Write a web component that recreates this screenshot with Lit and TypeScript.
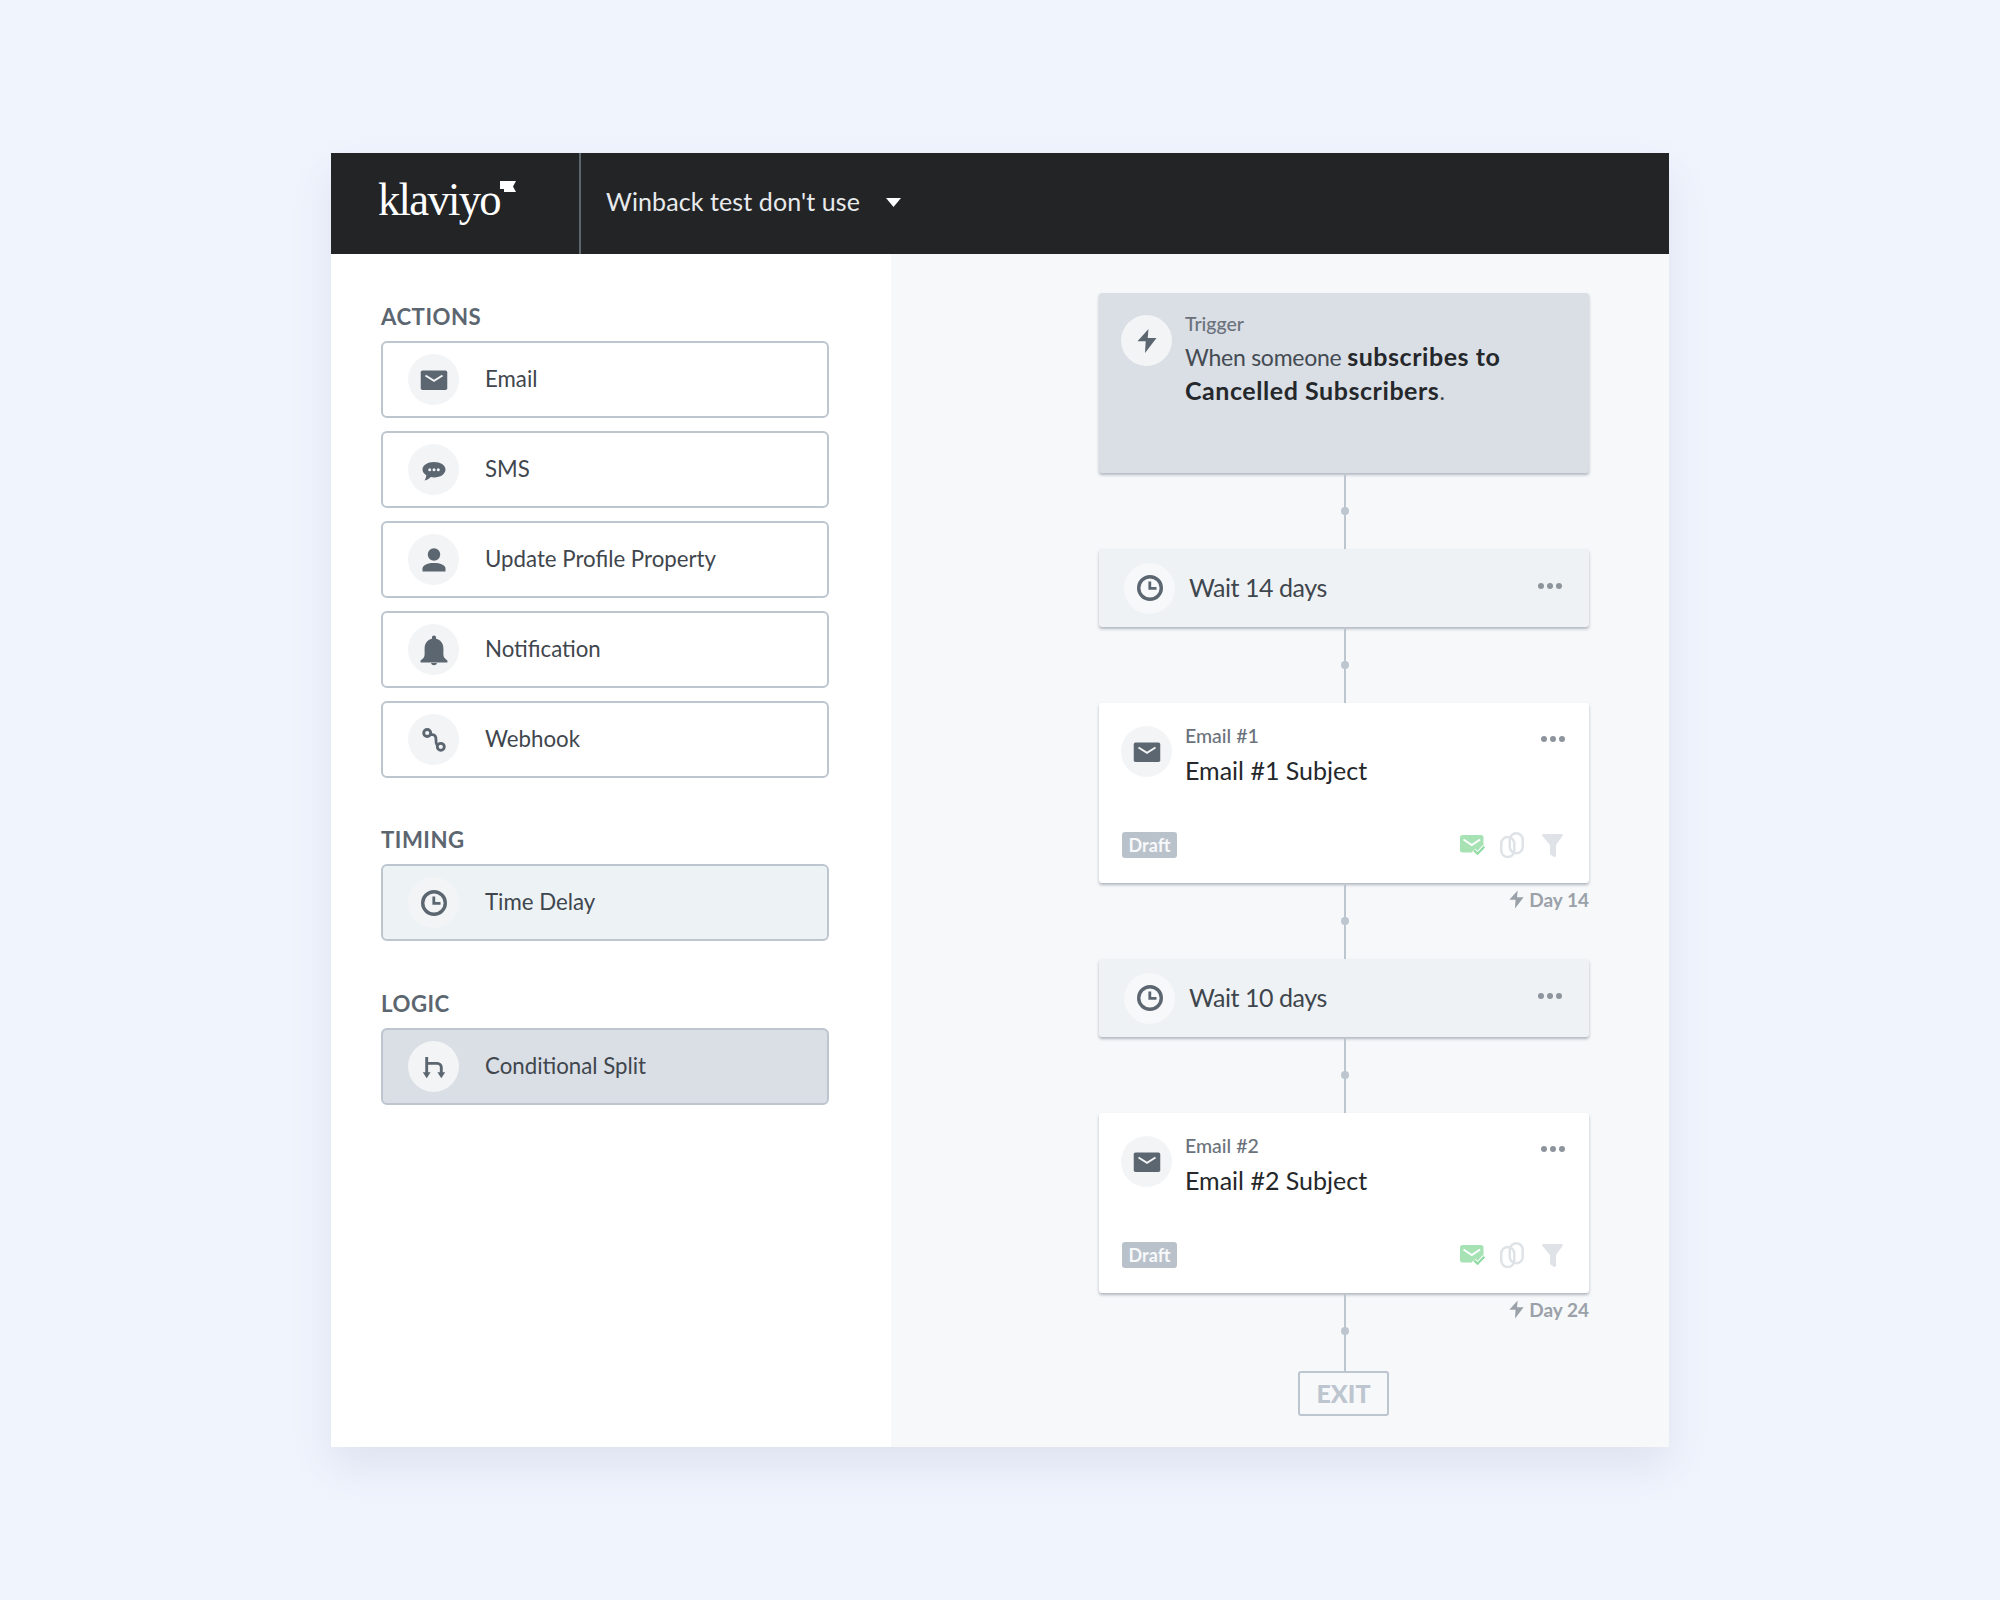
import { LitElement, html, css, svg } from "lit";
import { customElement } from "lit/decorators.js";

const icons: Record<string, any> = {
  mail: svg`<rect x="-.25" y="3.500" width="26.500" height="19.500" rx="1.800" fill="#5c6670"/><path d="M4.500 8.500 13 13.800l8.500-5.300" fill="none" stroke="#f2f4f6" stroke-width="2"/>`,
  sms: svg`<path d="M13 5C6.600 5 1.500 8.300 1.500 12.500c0 2.300 1.500 4.300 3.800 5.700-.1 1.900-.8 3.600-1.800 5.300 2.500-.5 4.700-1.900 6.200-3.500 1.100.3 2.200.5 3.300.5 6.400 0 11.500-3.600 11.500-8s-5.100-7.500-11.500-7.500z" fill="#5c6670"/><circle cx="8.700" cy="12.700" r="1.500" fill="#f2f4f6"/><circle cx="13" cy="12.700" r="1.500" fill="#f2f4f6"/><circle cx="17.300" cy="12.700" r="1.500" fill="#f2f4f6"/>`,
  person: svg`<circle cx="13" cy="7.500" r="6.200" fill="#5c6670"/><path d="M1.500 24.500v-3c0-3.500 5.500-5.500 11.500-5.500s11.500 2 11.500 5.500v3z" fill="#5c6670"/>`,
  bell: svg`<g transform="translate(13 13) scale(1.220) translate(-13 -12.300)"><path d="M13 .5c-1 0-1.700.7-1.700 1.700V3C7.500 4 5.300 7 5.300 11v5c0 2-1 3.300-3.300 5v1.500h22V21c-2.300-1.700-3.300-3-3.300-5v-5c0-4-2.200-7-6-8v-.8C14.700 1.200 14 .5 13 .5z" fill="#5c6670"/><path d="M10.500 23a2.600 2.600 0 0 0 5 0z" fill="#5c6670"/></g>`,
  hook: svg`<g fill="none" stroke="#5c6670" stroke-width="2.800"><circle cx="6.200" cy="6" r="3.500"/><circle cx="19.800" cy="19.800" r="3.500"/><path d="M9.500 7.600H11.500C14.500 7.600 15 9.800 15 12.800 15 15.800 15 18 16.800 18.300"/></g>`,
  clock: svg`<circle cx="13" cy="13" r="11.300" fill="none" stroke="#5c6670" stroke-width="3.400"/><path d="M12.800 6.500v6.800h6.700" fill="none" stroke="#5c6670" stroke-width="2.800"/>`,
  split: svg`<g fill="none" stroke="#5c6670" stroke-width="2.900"><path d="M5.700 3V20"/><path d="M5.700 9.400h10.500a4 4 0 0 1 4.100 4V20"/></g><path d="M1.800 18.300h7.800l-3.900 6zM16.400 18.300h7.800l-3.900 6z" fill="#5c6670"/>`,
  bolt: svg`<path d="M14.500 1 3.500 13.300h8.200L11 25 22.500 10h-8.800z" fill="#5c6670"/>`,
};

@customElement("app-root")
export class AppRoot extends LitElement {
  static styles = css`
    :host { display: block; min-height: 1600px; background: #f0f4fd; padding: 153px 331px 0; box-sizing: border-box; font-family: Lato, "Noto Sans", sans-serif; color: #3f464d; }
    * { box-sizing: border-box; }
    .window { width: 1338px; height: 1294px; display: flex; flex-direction: column; box-shadow: 0 20px 40px rgba(70, 80, 130, 0.10); }
    header { height: 101px; background: #232426; display: flex; align-items: center; flex: none; }
    .brand { width: 250px; height: 100%; border-right: 2px solid #5e666e; padding: 0 0 0 47px; display: flex; align-items: flex-start; gap: 1px; color: #fff; }
    .logo { font: 47px/90px "Liberation Serif", serif; letter-spacing: -1.8px; transform: scaleX(.95); transform-origin: left; margin-top: 1px; width: 120px; }
    .flag { width: 16px; height: 11px; margin-top: 28px; margin-left: 1px; }
    .flow-name { margin-left: 25px; margin-bottom: 5px; color: #e8eaec; font-size: 25px; letter-spacing: .1px; }
    .caret { margin-left: 26px; margin-bottom: 2px; width: 15px; height: 9px; }
    .body { flex: 1; display: flex; min-height: 0; }
    aside { width: 560px; background: #fff; padding: 48px 50px 0; }
    h2 { margin: 0; font-size: 22.200px; line-height: 29px; height: 39px; font-weight: 700; color: #5c6670; letter-spacing: .5px; }
    .group { display: flex; flex-direction: column; gap: 13px; margin-bottom: 48px; }
    .group.first { margin-bottom: 47px; }
    .item { height: 77px; width: 448px; border: 2px solid #bdc5cf; border-radius: 6px; background: #fff; display: flex; align-items: center; padding-left: 25px; font-size: 22.250px; }
    .item span { padding-bottom: 1.500px; }
    .item.time { background: #edf2f5; }
    .item.logic { background: #dadee5; }
    .circle { width: 51px; height: 51px; border-radius: 50%; background: #f2f4f6; display: flex; align-items: center; justify-content: center; flex: none; }
    .circle svg { width: 26px; height: 26px; overflow: visible; }
    .item .circle { margin-right: 26px; }
    .canvas { flex: 1; background: #f7f8fa; padding: 39px 80px 0 208px; display: flex; flex-direction: column; }
    .card { width: 490px; border-radius: 3px; box-shadow: 0 2px 3px rgba(110, 120, 135, .5); position: relative; flex: none; }
    .trigger { height: 180px; background: #dadee5; padding: 22px 22px; display: flex; gap: 13px; align-items: flex-start; }
    .label { font-size: 19.500px; color: #6a727b; line-height: 24px; font-weight: 500; margin-top: -3px; }
    .desc { font-size: 23px; line-height: 33.400px; letter-spacing: -.25px; color: #444b52; margin-top: 3.500px; width: 370px; }
    .desc b { color: #25282b; font-weight: 700; font-size: 25px; letter-spacing: .55px; }
    .wait { height: 78px; background: #eef2f4; padding-left: 25px; display: flex; align-items: center; font-size: 25px; letter-spacing: -.45px; gap: 14px; }
    .wait span { padding-bottom: 2px; }
    .wait .circle { background: #f6f8f9; }
    .dots { position: absolute; display: flex; gap: 3px; }
    .dots i { width: 6px; height: 6px; border-radius: 50%; background: #8d949c; }
    .wait .dots { right: 27px; top: 34px; }
    .email { height: 180px; background: #fff; padding: 23px 23px 23px 22px; }
    .email .dots { right: 24px; top: 33px; }
    .e-top { display: flex; gap: 13px; align-items: flex-start; height: 62px; }
    .e-top .label { margin-top: -2px; }
    .subject { font-size: 25px; color: #25282b; line-height: 34px; margin-top: 5px; }
    .e-foot { display: flex; align-items: center; margin-top: 44px; height: 26px; }
    .draft { width: 55px; height: 26px; margin-left: 1px; border-radius: 3px; background: #b9c1cb; color: #f7f8fa; font-size: 18px; font-weight: 700; display: flex; align-items: center; justify-content: center; }
    .e-icons { margin-left: auto; margin-right: 3px; display: flex; gap: 14px; align-items: center; }
    .e-icons svg { display: block; flex: none; }
    .e-icons .funnel { margin-left: 4px; }
    .link { width: 2px; height: 76px; background: #bdc5cf; margin-left: 245px; position: relative; flex: none; }
    .link.last { height: 78px; }
    .link::after { content: ""; position: absolute; left: -3px; top: 34px; width: 8px; height: 8px; border-radius: 50%; background: #bdc5cf; }
    .day { position: absolute; right: -243px; top: 5px; white-space: nowrap; color: #9aa1a9; font-size: 19px; font-weight: 700; display: flex; align-items: center; gap: 5px; }
    .day svg { width: 15px; height: 19px; }
    .day svg path { fill: #9aa1a9; }
    .exit { width: 91px; height: 45px; margin-left: 199px; border: 2px solid #bdc5cf; border-radius: 3px; color: #bdc5cf; font-size: 25px; font-weight: 900; display: flex; align-items: center; justify-content: center; flex: none; padding-bottom: 2px; }
  `;

  icon(n: string) {
    return html`<div class="circle"><svg viewBox="0 0 26 26">${icons[n]}</svg></div>`;
  }
  item(n: string, t: string, c = "") {
    return html`<div class="item ${c}">${this.icon(n)}<span>${t}</span></div>`;
  }
  dots() {
    return html`<div class="dots"><i></i><i></i><i></i></div>`;
  }
  wait(t: string) {
    return html`<div class="card wait">${this.icon("clock")}<span>${t}</span>${this.dots()}</div>`;
  }
  email(n: number) {
    return html`<div class="card email">
      <div class="e-top">${this.icon("mail")}<div><div class="label">Email #${n}</div><div class="subject">Email #${n} Subject</div></div></div>
      ${this.dots()}
      <div class="e-foot"><div class="draft">Draft</div>
        <div class="e-icons">
          <svg width="26" height="21" viewBox="0 0 26 21"><rect width="23.500" height="17.500" rx="2.500" fill="#a6e2b4"/><path d="M3.500 4.500l8.300 5.500 8.300-5.500" fill="none" stroke="#fff" stroke-width="2"/><path d="M13.500 15.500l4 4 7-7.500" fill="none" stroke="#fff" stroke-width="5"/><path d="M14 15.200l3.500 3.500 6.800-7" fill="none" stroke="#8fdba2" stroke-width="2.200"/></svg>
          <svg width="24" height="26" viewBox="0 0 24 26" fill="none" stroke="#dfe3e7" stroke-width="2.500"><rect x="1.250" y="5" width="13" height="20" rx="6.500"/><rect x="9.750" y="1.250" width="13" height="20" rx="6.500"/></svg>
          <svg class="funnel" width="21" height="23" viewBox="0 0 21 23"><path d="M1.500 0h18c1.300 0 1.800 1 1 2L14 11v10.500c0 1.200-1.300 1.800-2.300 1.200l-3-2A2 2 0 0 1 8 19V11L.5 2C-.3 1 .2 0 1.500 0z" fill="#dfe3e7"/></svg>
        </div></div>
    </div>`;
  }
  link(day = "", last = false) {
    return html`<div class="link ${last ? "last" : ""}">${day ? html`<div class="day"><svg viewBox="3 1 20 24">${icons.bolt}</svg>${day}</div>` : ""}</div>`;
  }

  render() {
    return html`<div class="window">
      <header>
        <div class="brand"><span class="logo">klaviyo</span><svg class="flag" viewBox="0 0 16 11"><path d="M0 0h16l-3 5.500 3 5.500H4V8H0z" fill="#fff"/></svg></div>
        <span class="flow-name">Winback test don't use</span>
        <svg class="caret" viewBox="0 0 15 9"><path d="M0 0h15L7.500 9z" fill="#fff"/></svg>
      </header>
      <div class="body">
        <aside>
          <h2>ACTIONS</h2>
          <div class="group first">
            ${this.item("mail", "Email")}
            ${this.item("sms", "SMS")}
            ${this.item("person", "Update Profile Property")}
            ${this.item("bell", "Notification")}
            ${this.item("hook", "Webhook")}
          </div>
          <h2>TIMING</h2>
          <div class="group">${this.item("clock", "Time Delay", "time")}</div>
          <h2>LOGIC</h2>
          <div class="group">${this.item("split", "Conditional Split", "logic")}</div>
        </aside>
        <section class="canvas">
          <div class="card trigger">${this.icon("bolt")}<div><div class="label">Trigger</div><div class="desc">When someone <b>subscribes to Cancelled Subscribers</b>.</div></div></div>
          ${this.link()}
          ${this.wait("Wait 14 days")}
          ${this.link()}
          ${this.email(1)}
          ${this.link("Day 14")}
          ${this.wait("Wait 10 days")}
          ${this.link()}
          ${this.email(2)}
          ${this.link("Day 24", true)}
          <div class="exit">EXIT</div>
        </section>
      </div>
    </div>`;
  }
}
